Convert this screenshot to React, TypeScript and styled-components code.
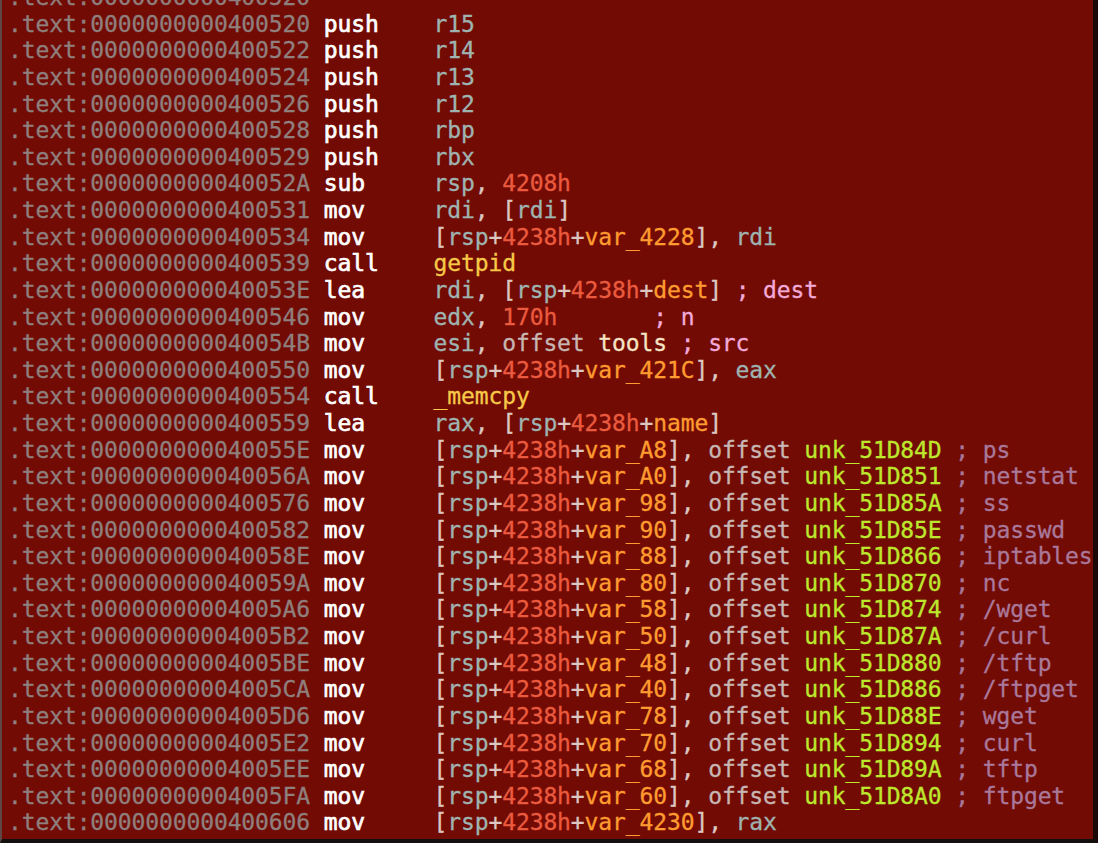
import React from "react";
import styled, { createGlobalStyle } from "styled-components";

const Global = createGlobalStyle`
  html, body { margin: 0; padding: 0; background: #730b05; }
  body { overflow: hidden; }
`;

const Window = styled.div`
  box-sizing: border-box;
  width: 1098px;
  height: 843px;
  overflow: hidden;
  background: #730b05;
  border-left: 2px solid #5e4644;
  border-right: 5px solid #1c0806;
  border-bottom: 4px solid #141010;
`;

const Listing = styled.div`
  margin-top: -16px;
  padding-left: 6px;
  font-family: "DejaVu Sans Mono", "Liberation Mono", monospace;
  font-size: 23px;
  letter-spacing: -0.12px;
  line-height: 26.63px;
  white-space: pre;
  -webkit-text-stroke: 0.3px currentColor;
`;

const Line = styled.div`
  height: 26.63px;
`;

type Kind =
  | "addr"
  | "mn"
  | "reg"
  | "punct"
  | "num"
  | "var"
  | "func"
  | "kw"
  | "name"
  | "unk"
  | "cmt"
  | "dim"
  | "sp";

const colors: Record<Kind, string> = {
  addr: "#8f7f7d",
  mn: "#ffffff",
  reg: "#9fb4b1",
  punct: "#dcc7c2",
  num: "#ea5a3e",
  var: "#ff9b30",
  func: "#f7c948",
  kw: "#c7b6b2",
  name: "#f5e5c5",
  unk: "#bde82e",
  cmt: "#f2aad8",
  dim: "#a9789a",
  sp: "inherit",
};

const Tok = styled.span<{ $kind: Kind }>`
  color: ${(p) => colors[p.$kind]};
`;

const Mnemonic = styled.span`
  color: #ffffff;
  -webkit-text-stroke: 0.7px #ffffff;
`;

const REGS = new Set([
  "r15", "r14", "r13", "r12", "rbp", "rbx", "rsp", "rdi", "edx", "esi", "eax", "rax",
]);
const FUNCS = new Set(["getpid", "_memcpy"]);

function classify(t: string): Kind {
  if (/^\s+$/.test(t)) return "sp";
  if (REGS.has(t)) return "reg";
  if (FUNCS.has(t)) return "func";
  if (t === "offset") return "kw";
  if (t === "tools") return "name";
  if (/^unk_/.test(t)) return "unk";
  if (/^var_/.test(t) || t === "dest" || t === "name") return "var";
  if (/^[0-9][0-9A-F]*h$/.test(t)) return "num";
  return "punct";
}

function tokenize(ops: string): { text: string; kind: Kind }[] {
  const parts = ops.match(/\s+|[A-Za-z_][A-Za-z0-9_]*|[0-9][0-9A-Fa-f]*h?|[^\sA-Za-z0-9_]/g) || [];
  return parts.map((p) => ({ text: p, kind: classify(p) }));
}

type Row = { a: string; m?: string; o?: string; c?: string; dim?: boolean };

const rows: Row[] = [
  { a: "400520" },
  { a: "400520", m: "push", o: "r15" },
  { a: "400522", m: "push", o: "r14" },
  { a: "400524", m: "push", o: "r13" },
  { a: "400526", m: "push", o: "r12" },
  { a: "400528", m: "push", o: "rbp" },
  { a: "400529", m: "push", o: "rbx" },
  { a: "40052A", m: "sub", o: "rsp, 4208h" },
  { a: "400531", m: "mov", o: "rdi, [rdi]" },
  { a: "400534", m: "mov", o: "[rsp+4238h+var_4228], rdi" },
  { a: "400539", m: "call", o: "getpid" },
  { a: "40053E", m: "lea", o: "rdi, [rsp+4238h+dest] ", c: "; dest" },
  { a: "400546", m: "mov", o: "edx, 170h       ", c: "; n" },
  { a: "40054B", m: "mov", o: "esi, offset tools ", c: "; src" },
  { a: "400550", m: "mov", o: "[rsp+4238h+var_421C], eax" },
  { a: "400554", m: "call", o: "_memcpy" },
  { a: "400559", m: "lea", o: "rax, [rsp+4238h+name]" },
  { a: "40055E", m: "mov", o: "[rsp+4238h+var_A8], offset unk_51D84D ", c: "; ps", dim: true },
  { a: "40056A", m: "mov", o: "[rsp+4238h+var_A0], offset unk_51D851 ", c: "; netstat", dim: true },
  { a: "400576", m: "mov", o: "[rsp+4238h+var_98], offset unk_51D85A ", c: "; ss", dim: true },
  { a: "400582", m: "mov", o: "[rsp+4238h+var_90], offset unk_51D85E ", c: "; passwd", dim: true },
  { a: "40058E", m: "mov", o: "[rsp+4238h+var_88], offset unk_51D866 ", c: "; iptables", dim: true },
  { a: "40059A", m: "mov", o: "[rsp+4238h+var_80], offset unk_51D870 ", c: "; nc", dim: true },
  { a: "4005A6", m: "mov", o: "[rsp+4238h+var_58], offset unk_51D874 ", c: "; /wget", dim: true },
  { a: "4005B2", m: "mov", o: "[rsp+4238h+var_50], offset unk_51D87A ", c: "; /curl", dim: true },
  { a: "4005BE", m: "mov", o: "[rsp+4238h+var_48], offset unk_51D880 ", c: "; /tftp", dim: true },
  { a: "4005CA", m: "mov", o: "[rsp+4238h+var_40], offset unk_51D886 ", c: "; /ftpget", dim: true },
  { a: "4005D6", m: "mov", o: "[rsp+4238h+var_78], offset unk_51D88E ", c: "; wget", dim: true },
  { a: "4005E2", m: "mov", o: "[rsp+4238h+var_70], offset unk_51D894 ", c: "; curl", dim: true },
  { a: "4005EE", m: "mov", o: "[rsp+4238h+var_68], offset unk_51D89A ", c: "; tftp", dim: true },
  { a: "4005FA", m: "mov", o: "[rsp+4238h+var_60], offset unk_51D8A0 ", c: "; ftpget", dim: true },
  { a: "400606", m: "mov", o: "[rsp+4238h+var_4230], rax" },
];

export default function App() {
  return (
    <>
      <Global />
      <Window>
        <Listing>
          {rows.map((r, i) => (
            <Line key={i}>
              <Tok $kind="addr">{".text:0000000000" + r.a}</Tok>
              {r.m && <Mnemonic>{" " + r.m.padEnd(8, " ")}</Mnemonic>}
              {r.o &&
                tokenize(r.o).map((t, j) => (
                  <Tok key={j} $kind={t.kind}>
                    {t.text}
                  </Tok>
                ))}
              {r.c && <Tok $kind={r.dim ? "dim" : "cmt"}>{r.c}</Tok>}
            </Line>
          ))}
        </Listing>
      </Window>
    </>
  );
}
